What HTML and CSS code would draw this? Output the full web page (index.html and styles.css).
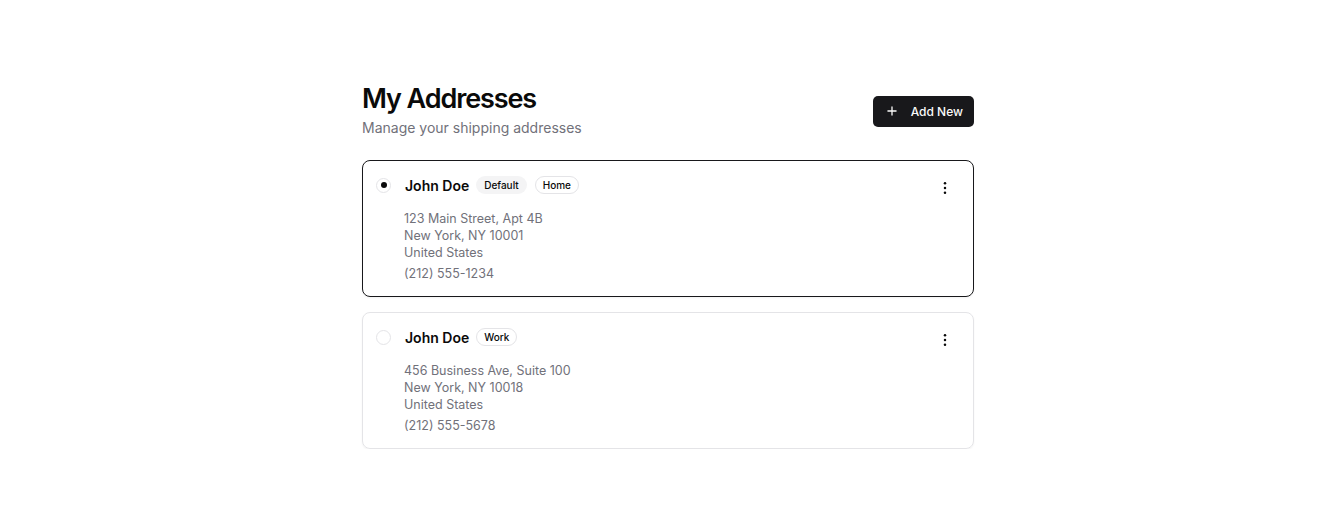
FILE: index.html
```html
<!DOCTYPE html>
<html lang="en">

<head>
    <meta charset="UTF-8">
    <meta name="viewport" content="width=device-width, initial-scale=1.0">
    <title>My Addresses</title>
    <link rel="stylesheet" href="styles.css">
</head>

<body>
    <div class="container">
        <div class="page-header">
            <div>
                <h1>My Addresses</h1>
                <p class="subtitle">Manage your shipping addresses</p>
            </div>
            <button class="add-btn">
                <svg width="14" height="14" viewBox="0 0 24 24" fill="none" stroke="currentColor" stroke-width="2.2" stroke-linecap="round">
                    <path d="M12 5v14M5 12h14" />
                </svg>
                Add New
            </button>
        </div>

        <div class="address-list">
            <div class="address-card selected">
                <div class="card-top">
                    <span class="radio checked"></span>
                    <span class="name">John Doe</span>
                    <span class="badge filled">Default</span>
                    <span class="badge outline">Home</span>
                    <button class="menu-btn" aria-label="More">
                        <svg width="16" height="16" viewBox="0 0 24 24" fill="currentColor">
                            <circle cx="12" cy="5" r="1.9" />
                            <circle cx="12" cy="12" r="1.9" />
                            <circle cx="12" cy="19" r="1.9" />
                        </svg>
                    </button>
                </div>
                <div class="card-body">
                    <p>123 Main Street, Apt 4B</p>
                    <p>New York, NY 10001</p>
                    <p>United States</p>
                    <p class="phone">(212) 555-1234</p>
                </div>
            </div>

            <div class="address-card">
                <div class="card-top">
                    <span class="radio"></span>
                    <span class="name">John Doe</span>
                    <span class="badge outline">Work</span>
                    <button class="menu-btn" aria-label="More">
                        <svg width="16" height="16" viewBox="0 0 24 24" fill="currentColor">
                            <circle cx="12" cy="5" r="1.9" />
                            <circle cx="12" cy="12" r="1.9" />
                            <circle cx="12" cy="19" r="1.9" />
                        </svg>
                    </button>
                </div>
                <div class="card-body">
                    <p>456 Business Ave, Suite 100</p>
                    <p>New York, NY 10018</p>
                    <p>United States</p>
                    <p class="phone">(212) 555-5678</p>
                </div>
            </div>
        </div>
    </div>
</body>

</html>
```

FILE: styles.css
```css
body {
    font-family: Inter, 'Liberation Sans', sans-serif;
    background-color: #ffffff;
    color: #0a0a0a;
    margin: 0;
}

.container {
    width: 612px;
    margin: 0 auto;
    padding-top: 82px;
}

.page-header {
    display: flex;
    justify-content: space-between;
    align-items: center;
    margin-bottom: 20px;
}

h1 {
    font-size: 27px;
    line-height: 34px;
    font-weight: 600;
    letter-spacing: -1.1px;
    margin: 0;
}

.subtitle {
    font-size: 14px;
    line-height: 24px;
    color: #71717a;
    margin: 0;
}

.add-btn {
    display: flex;
    align-items: center;
    gap: 12px;
    height: 31px;
    padding: 0 11px 0 12px;
    background-color: #18181b;
    color: #fafafa;
    border: none;
    border-radius: 5px;
    font-family: inherit;
    font-size: 12px;
    font-weight: 500;
    cursor: pointer;
}

.address-list {
    display: flex;
    flex-direction: column;
    gap: 15px;
}

.address-card {
    border: 1px solid #e4e4e7;
    border-radius: 8px;
    padding: 15px 16px 14px 13px;
    box-shadow: 0 1px 2px rgba(0, 0, 0, 0.05);
}

.address-card.selected {
    border-color: #18181b;
}

.card-top {
    display: flex;
    align-items: center;
    height: 18px;
}

.radio {
    width: 13px;
    height: 13px;
    border: 1px solid #e4e4e7;
    border-radius: 50%;
    display: flex;
    align-items: center;
    justify-content: center;
    margin-right: 14px;
    flex-shrink: 0;
}

.radio.checked::after {
    content: "";
    width: 6px;
    height: 6px;
    border-radius: 50%;
    background-color: #0a0a0a;
}

.name {
    font-size: 14px;
    font-weight: 600;
    margin-right: 7px;
}

.badge {
    font-size: 10px;
    font-weight: 500;
    line-height: 16px;
    padding: 0 7px;
    border-radius: 999px;
    border: 1px solid transparent;
    margin-right: 8px;
}

.badge.filled {
    background-color: #f4f4f5;
}

.badge.outline {
    border-color: #e4e4e7;
}

.menu-btn {
    margin-left: auto;
    width: 24px;
    height: 24px;
    margin-top: 6px;
    display: flex;
    align-items: center;
    justify-content: center;
    background: none;
    border: none;
    padding: 0;
    color: #0a0a0a;
    cursor: pointer;
}

.card-body {
    padding-left: 28px;
    margin-top: 16px;
    font-size: 12.5px;
    line-height: 17px;
    color: #71717a;
}

.card-body p {
    margin: 0;
}

.card-body .phone {
    margin-top: 4px;
}
```
